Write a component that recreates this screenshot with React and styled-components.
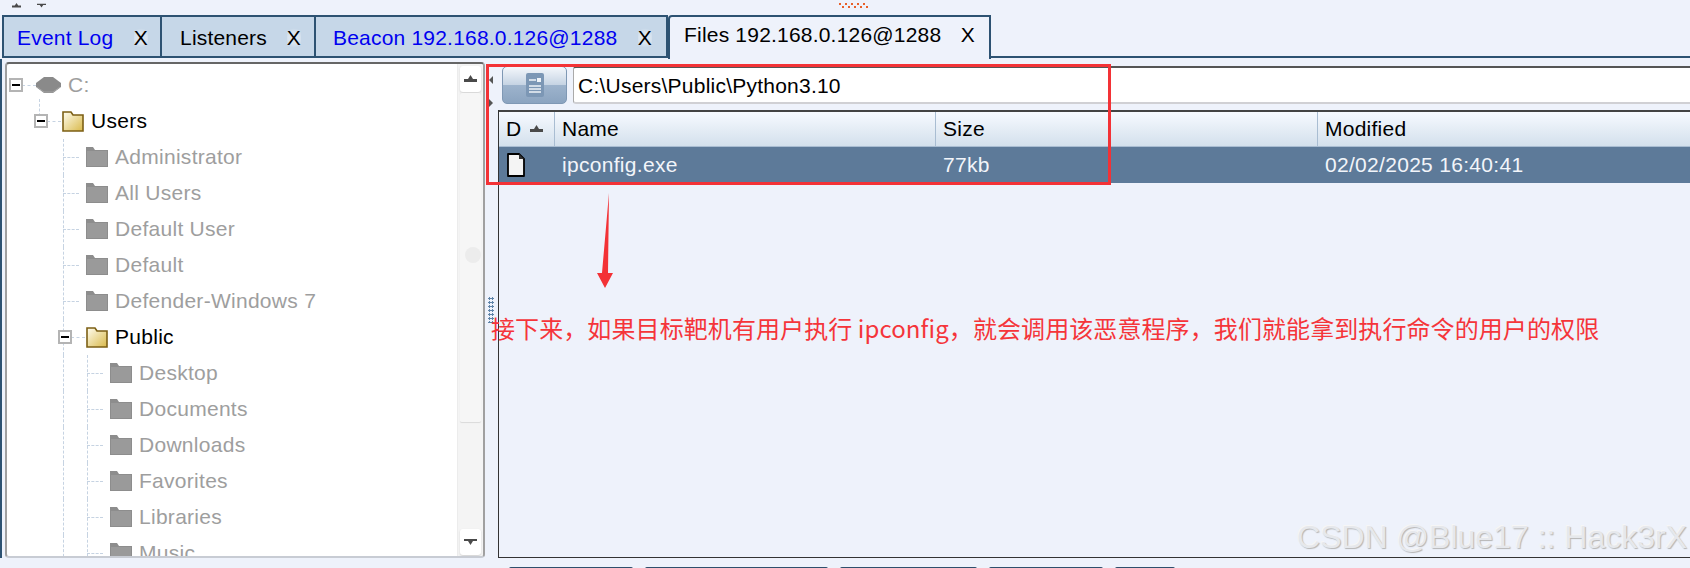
import React from "react";
import styled, { createGlobalStyle } from "styled-components";

const GlobalStyle = createGlobalStyle`
  html, body {
    margin: 0;
    padding: 0;
    background: #eef2fb;
    overflow: hidden;
  }
  * { box-sizing: border-box; }
`;

const Page = styled.div`
  position: relative;
  width: 1690px;
  height: 568px;
  overflow: hidden;
  background: #eef2fb;
  font-family: "Liberation Sans", Arial, sans-serif;
  font-size: 21px;
  color: #000;
`;

const TopStrip = styled.div`
  height: 15px;
  display: flex;
  align-items: flex-start;
  position: relative;
  padding: 3px 0 0 12px;
  gap: 16px;
`;

const Grip = styled.div`
  position: absolute;
  left: 839px;
  top: 3px;
  width: 29px;
  height: 6px;
  background-image:
    repeating-linear-gradient(to right, #e8602a 0 2px, transparent 2px 6px),
    repeating-linear-gradient(to right, transparent 0 3px, #e8602a 3px 5px, transparent 5px 6px);
  background-size: 100% 2px, 100% 2px;
  background-repeat: no-repeat;
  background-position: 0 0, 0 3px;
`;

const TabBar = styled.div`
  height: 44px;
  display: flex;
  align-items: stretch;
  padding-left: 2px;
`;

const Tab = styled.div`
  display: flex;
  align-items: center;
  justify-content: space-between;
  width: ${(p) => p.$w}px;
  height: ${(p) => (p.$active ? 44 : 43)}px;
  padding: ${(p) => (p.$active ? "0" : "2px")} ${(p) => p.$pr || 14}px ${(p) => (p.$active ? "6px" : "0")} ${(p) => p.$pl}px;
  color: ${(p) => (p.$blue ? "#0000f0" : "#000")};
  background: ${(p) => (p.$active ? "#eef2fb" : "#c6d7e8")};
  border-top: 2px solid #2d5272;
  border-left: ${(p) => (p.$first || p.$active ? "2px" : "0")} solid #2d5272;
  border-right: 2px solid #2d5272;
  border-bottom: ${(p) => (p.$active ? "0" : "2px solid #2d5272")};
  border-top-left-radius: ${(p) => (p.$active ? "4px" : "0")};
  white-space: nowrap;
  letter-spacing: 0.2px;
`;

const Close = styled.span`
  color: #000;
  background: radial-gradient(circle, rgba(255, 255, 255, 0.35) 40%, transparent 70%);
`;

const TabFill = styled.div`
  flex: 1;
  border-bottom: 2px solid #2d5272;
  height: 43px;
`;

const Body = styled.div`
  display: flex;
  height: 499px;
  padding: 3px 0 0 3px;
  border-left: 2px solid #2d5272;
`;

const TreePanel = styled.div`
  width: 480px;
  display: flex;
  background: #fff;
  border: 2px solid #a0a0a0;
  border-top-color: #666;
  border-bottom-color: #c8ccd4;
  border-radius: 4px;
  overflow: hidden;
`;

const TreeList = styled.div`
  flex: 1;
  overflow: hidden;
  padding-top: 3px;
`;

const Row = styled.div`
  position: relative;
  height: 36px;
  display: flex;
  align-items: center;
  padding-left: ${(p) => p.$indent}px;
  color: ${(p) => (p.$open ? "#000" : "#9e9e9e")};
  letter-spacing: 0.28px;
  white-space: nowrap;
`;

const Guide = styled.span`
  position: absolute;
  left: ${(p) => p.$x}px;
  top: ${(p) => p.$top || 0}px;
  bottom: ${(p) => p.$bottom || 0}px;
  border-left: 1px dashed #c6d3e2;
`;

const Branch = styled.span`
  position: absolute;
  left: ${(p) => p.$x}px;
  top: 18px;
  width: ${(p) => p.$w}px;
  border-top: 1px dashed #c6d3e2;
`;

const Toggle = styled.span`
  position: absolute;
  left: ${(p) => p.$x}px;
  top: 11px;
  width: 14px;
  height: 14px;
  background: #fff;
  border: 2px solid #b4b4b4;
  &::after {
    content: "";
    position: absolute;
    left: 1px;
    top: 4px;
    width: 8px;
    height: 2px;
    background: #000;
  }
`;

const IconSlot = styled.span`
  display: flex;
  align-items: center;
  width: ${(p) => p.$w || 22}px;
  height: 22px;
  margin-right: 7px;
  flex: none;
`;

const ScrollBar = styled.div`
  width: 26px;
  display: flex;
  flex-direction: column;
  background: #f4f4f4;
  border-left: 1px solid #ececec;
`;

const ScrollBtn = styled.div`
  height: 26px;
  margin: ${(p) => (p.$down ? "0 2px 1px" : "2px 2px 0")};
  display: flex;
  align-items: center;
  justify-content: center;
  background: #fff;
  border-radius: 3px;
  box-shadow: 0 1px 2px #d0d0d0;
`;

const Thumb = styled.div`
  height: 330px;
  margin: 1px 2px 0;
  background: #f6f6f6;
  border-bottom: 1px solid #dcdcdc;
  border-radius: 2px;
  position: relative;
  box-shadow: 0 0 1px #ddd;
  &::after {
    content: "";
    position: absolute;
    right: 0;
    top: 154px;
    width: 16px;
    height: 16px;
    border-radius: 50%;
    background: #ececec;
  }
`;

const ScrollTrack = styled.div`
  flex: 1;
`;

const Divider = styled.div`
  width: 13px;
  position: relative;
`;

const Handle = styled.span`
  position: absolute;
  left: 4px;
  top: ${(p) => p.$y}px;
  width: 0;
  height: 0;
  border-top: 4px solid transparent;
  border-bottom: 4px solid transparent;
  ${(p) => (p.$right ? "border-left: 4px solid #555;" : "border-right: 4px solid #555;")}
`;

const Dots = styled.span`
  position: absolute;
  left: 3px;
  top: 235px;
  width: 6px;
  height: 26px;
  background-image: radial-gradient(circle at 1.5px 1.5px, #5f84a8 1.2px, transparent 1.3px);
  background-size: 3px 4px;
`;

const FilesPane = styled.div`
  flex: 1;
  min-width: 0;
  display: flex;
  flex-direction: column;
`;

const PathBar = styled.div`
  display: flex;
  gap: 6px;
  height: 48px;
  padding: 4px 0 0 4px;
`;

const UpButton = styled.div`
  width: 65px;
  height: 38px;
  display: flex;
  align-items: center;
  justify-content: center;
  border-radius: 5px;
  border: 1px solid #7f98b4;
  background: linear-gradient(to bottom, #f4f7fb 0%, #c5d3e3 50%, #9db3cc 51%, #8ba4c0 100%);
`;

const PathField = styled.div`
  flex: 1;
  height: 38px;
  display: flex;
  align-items: center;
  padding: 1px 0 0 4px;
  background: #fff;
  border-top: 2px solid #555;
  border-left: 1px solid #aaa;
  border-bottom: 2px solid #d0d0d4;
  border-radius: 3px 0 0 3px;
  letter-spacing: 0.23px;
`;

const TablePane = styled.div`
  flex: 1;
  border-left: 1px solid #333;
  border-bottom: 1px solid #333;
`;

const HeaderRow = styled.div`
  display: grid;
  grid-template-columns: 56px 381px 382px 1fr;
  height: 37px;
  border-top: 2px solid #444;
  border-bottom: 1px solid #a9bdd2;
  background: linear-gradient(to bottom, #f7faff, #d3e0ec);
`;

const HeaderCell = styled.div`
  display: flex;
  align-items: center;
  gap: 9px;
  padding-left: 7px;
  border-right: ${(p) => (p.$last ? "0" : "1px solid #a9bdd2")};
  letter-spacing: 0.25px;
`;

const DataRow = styled.div`
  display: grid;
  grid-template-columns: 56px 381px 382px 1fr;
  height: 36px;
  background: #5d7a99;
  color: #f2f5fa;
  letter-spacing: 0.3px;
`;

const DataCell = styled.div`
  display: flex;
  align-items: center;
  padding-left: 7px;
`;

const RedBox = styled.div`
  position: absolute;
  left: 486px;
  top: 64px;
  width: 625px;
  height: 121px;
  border: 3px solid #f33236;
`;

const Arrow = styled.svg`
  position: absolute;
  left: 594px;
  top: 190px;
`;

const Note = styled.div`
  position: absolute;
  left: 491px;
  top: 311px;
  color: #f5353a;
  font-family: "Noto Sans CJK SC", "Liberation Sans", sans-serif;
  font-size: 24px;
  line-height: 34px;
  letter-spacing: 0.09px;
  white-space: nowrap;
`;

const Watermark = styled.div`
  position: absolute;
  right: 3px;
  top: 519px;
  font-size: 32px;
  line-height: 36px;
  color: #e6e8ec;
  text-shadow: 1px 1px 1px #b5b5b5, -1px -1px 0 #f6f6f6;
  white-space: nowrap;
`;

const Footer = styled.div`
  position: absolute;
  left: 509px;
  top: 567px;
  display: flex;
  gap: 12px;
`;

const FooterBtn = styled.div`
  width: ${(p) => p.$w}px;
  height: 2px;
  background: #2f4f6c;
  border-radius: 2px 2px 0 0;
`;

const Triangle = ({ down, small }) => (
  <svg width={small ? 9 : 13} height={small ? 5 : 8} viewBox="0 0 13 8" preserveAspectRatio="none">
    <path d={down ? "M0 1h13v2H9L6.500 7 4 3H0z" : "M6.500 0 9 4h4v3H0V4h4z"} fill="#4a4a4a" />
  </svg>
);

const Disk = () => (
  <svg width="25" height="18" viewBox="0 0 25 18">
    <path d="M8 1h9l8 6v4l-8 6H8l-8-6V7z" fill="#8a8a8a" />
    <path d="M1 11l7 5h9l7-5" fill="none" stroke="#a4a4a4" />
  </svg>
);

const OpenFolder = () => (
  <svg width="22" height="22" viewBox="0 0 22 22">
    <defs>
      <linearGradient id="fold" x1="0" y1="0" x2="1" y2="1">
        <stop offset="0" stopColor="#fffdf0" />
        <stop offset="1" stopColor="#d9b94a" />
      </linearGradient>
    </defs>
    <path d="M1 2h8l2 3h10v16H1z" fill="url(#fold)" stroke="#7c5f14" strokeWidth="1.600" />
  </svg>
);

const GrayFolder = () => (
  <svg width="22" height="22" viewBox="0 0 22 22">
    <path d="M0 1h7l2 3h13v17H0z" fill="#8d8d8d" />
    <path d="M1 5h20v15H1z" fill="#9a9a9a" />
  </svg>
);

const FileGlyph = () => (
  <svg width="20" height="24" viewBox="0 0 20 24">
    <path d="M2 1h11l5 5v17H2z" fill="#f4f4f4" stroke="#000" strokeWidth="1.800" strokeLinejoin="round" />
    <path d="M13 1v5h5z" fill="#333" />
  </svg>
);

const ListGlyph = () => (
  <svg width="18" height="24" viewBox="0 0 18 24">
    <rect width="18" height="24" rx="2" fill="#7c97b5" />
    <path d="M3 7h7M3 13h12M3 16h12M3 19h12" stroke="#eef3f8" strokeWidth="1.300" />
    <rect x="11" y="5" width="4" height="4" fill="#eef3f8" />
  </svg>
);

const folders = [
  { name: "Administrator", depth: 1 },
  { name: "All Users", depth: 1 },
  { name: "Default User", depth: 1 },
  { name: "Default", depth: 1 },
  { name: "Defender-Windows 7", depth: 1 },
  { name: "Public", depth: 1, open: true },
  { name: "Desktop", depth: 2 },
  { name: "Documents", depth: 2 },
  { name: "Downloads", depth: 2 },
  { name: "Favorites", depth: 2 },
  { name: "Libraries", depth: 2 },
  { name: "Music", depth: 2 },
];

const Tree = () => (
  <TreeList>
    <Row $indent={29}>
      <Branch $x={15} $w={14} />
      <Toggle $x={2} />
      <IconSlot $w={25}>
        <Disk />
      </IconSlot>
      C:
    </Row>
    <Row $indent={55} $open>
      <Guide $x={32} $top={-4} $bottom={18} />
      <Branch $x={40} $w={14} />
      <Toggle $x={27} />
      <IconSlot>
        <OpenFolder />
      </IconSlot>
      Users
    </Row>
    {folders.map((f) => (
      <Row key={f.name} $indent={f.depth === 1 ? 79 : 103} $open={f.open}>
        <Guide $x={56} />
        {f.depth === 2 && <Guide $x={80} />}
        {f.open ? (
          <>
            <Branch $x={64} $w={14} />
            <Toggle $x={51} />
          </>
        ) : (
          <Branch $x={f.depth === 1 ? 56 : 80} $w={16} />
        )}
        <IconSlot>{f.open ? <OpenFolder /> : <GrayFolder />}</IconSlot>
        {f.name}
      </Row>
    ))}
  </TreeList>
);

export default function App() {
  return (
    <Page>
      <GlobalStyle />
      <TopStrip>
        <Triangle small />
        <Triangle small down />
        <Grip />
      </TopStrip>
      <TabBar>
        <Tab $w={160} $pl={13} $pr={12} $blue $first>
          <span>Event Log</span>
          <Close>X</Close>
        </Tab>
        <Tab $w={154} $pl={18} $pr={13}>
          <span>Listeners</span>
          <Close>X</Close>
        </Tab>
        <Tab $w={352} $pl={17} $blue>
          <span>Beacon 192.168.0.126@1288</span>
          <Close>X</Close>
        </Tab>
        <Tab $w={323} $pl={14} $active>
          <span>Files 192.168.0.126@1288</span>
          <Close>X</Close>
        </Tab>
        <TabFill />
      </TabBar>
      <Body>
        <TreePanel>
          <Tree />
          <ScrollBar>
            <ScrollBtn>
              <Triangle />
            </ScrollBtn>
            <Thumb />
            <ScrollTrack />
            <ScrollBtn $down>
              <Triangle down />
            </ScrollBtn>
          </ScrollBar>
        </TreePanel>
        <Divider>
          <Handle $y={14} />
          <Handle $y={37} $right />
          <Dots />
        </Divider>
        <FilesPane>
          <PathBar>
            <UpButton>
              <ListGlyph />
            </UpButton>
            <PathField>C:\Users\Public\Python3.10</PathField>
          </PathBar>
          <TablePane>
            <HeaderRow>
              <HeaderCell>
                D <Triangle />
              </HeaderCell>
              <HeaderCell>Name</HeaderCell>
              <HeaderCell>Size</HeaderCell>
              <HeaderCell $last>Modified</HeaderCell>
            </HeaderRow>
            <DataRow>
              <DataCell>
                <FileGlyph />
              </DataCell>
              <DataCell>ipconfig.exe</DataCell>
              <DataCell>77kb</DataCell>
              <DataCell>02/02/2025 16:40:41</DataCell>
            </DataRow>
          </TablePane>
        </FilesPane>
      </Body>
      <RedBox />
      <Arrow width="24" height="100" viewBox="0 0 24 100">
        <path d="M15 3 14 83H19L11 98 3 83H8z" fill="#f33236" />
      </Arrow>
      <Note>接下来，如果目标靶机有用户执行 ipconfig，就会调用该恶意程序，我们就能拿到执行命令的用户的权限</Note>
      <Watermark>CSDN @Blue17 :: Hack3rX</Watermark>
      <Footer>
        <FooterBtn $w={124} />
        <FooterBtn $w={183} />
        <FooterBtn $w={137} />
        <FooterBtn $w={114} />
        <FooterBtn $w={60} />
      </Footer>
    </Page>
  );
}
